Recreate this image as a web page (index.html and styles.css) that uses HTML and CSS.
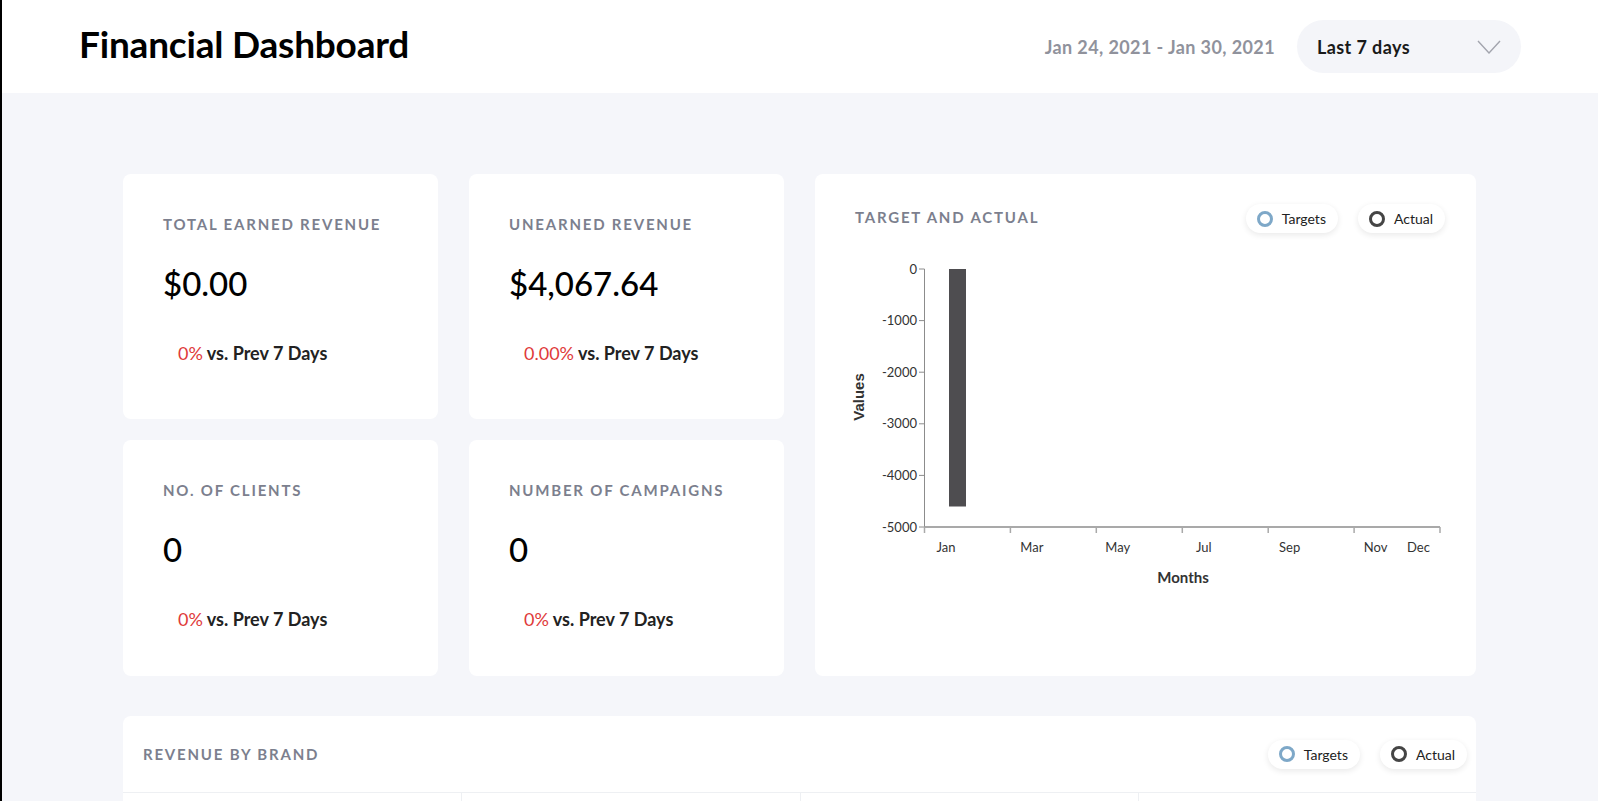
FILE: index.html
```html
<!DOCTYPE html>
<html lang="en">
<head>
<meta charset="utf-8">
<title>Financial Dashboard</title>
<link rel="stylesheet" href="styles.css">
</head>
<body>
<header class="topbar">
  <h1 class="title">Financial Dashboard</h1>
  <div class="range">
    <span class="range-dates">Jan 24, 2021 - Jan 30, 2021</span>
    <div class="select">
      <span>Last 7 days</span>
      <svg class="chev" width="24" height="14" viewBox="0 0 24 14"><path d="M1 1 L12 13 L23 1" fill="none" stroke="#a3a5ae" stroke-width="1.4"/></svg>
    </div>
  </div>
</header>
<main class="content">
  <section class="grid">
    <div class="card stat">
      <div class="label">TOTAL EARNED REVENUE</div>
      <div class="value">$0.00</div>
      <div class="change"><span class="neg">0%</span> vs. Prev 7 Days</div>
    </div>
    <div class="card stat">
      <div class="label">UNEARNED REVENUE</div>
      <div class="value">$4,067.64</div>
      <div class="change"><span class="neg">0.00%</span> vs. Prev 7 Days</div>
    </div>
    <div class="card chart-card">
      <div class="card-head">
        <div class="label">TARGET AND ACTUAL</div>
        <div class="legend">
          <span class="pill"><i class="ring ring-target"></i>Targets</span>
          <span class="pill"><i class="ring ring-actual"></i>Actual</span>
        </div>
      </div>
      <svg class="chart" width="661" height="380" viewBox="0 0 661 380">
        <g class="yaxis" font-size="13" fill="#333" text-anchor="end">
          <line x1="109.5" y1="36" x2="109.5" y2="294" stroke="#8c8c8c" stroke-width="1"/>
          <line x1="104" y1="36" x2="109.5" y2="36" stroke="#8c8c8c"/>
          <line x1="104" y1="87.6" x2="109.5" y2="87.6" stroke="#8c8c8c"/>
          <line x1="104" y1="139.2" x2="109.5" y2="139.2" stroke="#8c8c8c"/>
          <line x1="104" y1="190.8" x2="109.5" y2="190.8" stroke="#8c8c8c"/>
          <line x1="104" y1="242.4" x2="109.5" y2="242.4" stroke="#8c8c8c"/>
          <line x1="104" y1="294" x2="109.5" y2="294" stroke="#8c8c8c"/>
          <text x="102" y="40.5">0</text>
          <text x="102" y="92">-1000</text>
          <text x="102" y="143.7">-2000</text>
          <text x="102" y="195.3">-3000</text>
          <text x="102" y="246.9">-4000</text>
          <text x="102" y="298.5">-5000</text>
        </g>
        <text class="axis-title-y" x="0" y="0" transform="translate(49 164) rotate(-90)" text-anchor="middle">Values</text>
        <rect x="134" y="36" width="17" height="237.5" fill="#4e4d50"/>
        <g class="xaxis" font-size="13" fill="#333" text-anchor="middle">
          <line x1="109.5" y1="294" x2="625" y2="294" stroke="#a9a9a9" stroke-width="2"/>
          <line x1="109.5" y1="294" x2="109.5" y2="300" stroke="#a9a9a9" stroke-width="1.5"/>
          <line x1="195.4" y1="294" x2="195.4" y2="300" stroke="#a9a9a9" stroke-width="1.5"/>
          <line x1="281.3" y1="294" x2="281.3" y2="300" stroke="#a9a9a9" stroke-width="1.5"/>
          <line x1="367.3" y1="294" x2="367.3" y2="300" stroke="#a9a9a9" stroke-width="1.5"/>
          <line x1="453.2" y1="294" x2="453.2" y2="300" stroke="#a9a9a9" stroke-width="1.5"/>
          <line x1="539.1" y1="294" x2="539.1" y2="300" stroke="#a9a9a9" stroke-width="1.5"/>
          <line x1="625" y1="294" x2="625" y2="300" stroke="#a9a9a9" stroke-width="1.5"/>
          <text x="131" y="318.5">Jan</text>
          <text x="216.9" y="318.5">Mar</text>
          <text x="302.8" y="318.5">May</text>
          <text x="388.8" y="318.5">Jul</text>
          <text x="474.7" y="318.5">Sep</text>
          <text x="560.6" y="318.5">Nov</text>
          <text x="603.5" y="318.5">Dec</text>
        </g>
        <text class="axis-title-x" x="368" y="349.5" text-anchor="middle">Months</text>
      </svg>
    </div>
    <div class="card stat stat-low">
      <div class="label">NO. OF CLIENTS</div>
      <div class="value">0</div>
      <div class="change"><span class="neg">0%</span> vs. Prev 7 Days</div>
    </div>
    <div class="card stat stat-low">
      <div class="label">NUMBER OF CAMPAIGNS</div>
      <div class="value">0</div>
      <div class="change"><span class="neg">0%</span> vs. Prev 7 Days</div>
    </div>
  </section>
  <section class="card brand-card">
    <div class="brand-head">
      <div class="label">REVENUE BY BRAND</div>
      <div class="legend">
        <span class="pill"><i class="ring ring-target"></i>Targets</span>
        <span class="pill"><i class="ring ring-actual"></i>Actual</span>
      </div>
    </div>
    <div class="brand-cols">
      <div class="brand-col"></div>
      <div class="brand-col"></div>
      <div class="brand-col"></div>
      <div class="brand-col"></div>
    </div>
  </section>
</main>
</body>
</html>
```
FILE: styles.css
```css
* { box-sizing: border-box; }

html, body { margin: 0; padding: 0; }

body {
  font-family: "Lato", "Noto Sans", sans-serif;
  background: #f5f6fa;
  border-left: 2px solid #000;
  min-height: 100vh;
  color: #111;
}

.topbar {
  height: 93px;
  background: #fff;
  display: flex;
  align-items: center;
  justify-content: space-between;
  padding: 0 77px 0 77px;
}

.title {
  margin: 0;
  font-size: 37px;
  font-weight: 700;
  color: #000;
  letter-spacing: -0.2px;
  position: relative;
  top: -3px;
}

.range {
  display: flex;
  align-items: center;
  gap: 22px;
}

.range-dates {
  font-size: 18px;
  font-weight: 700;
  letter-spacing: 0.4px;
  color: #90929c;
}

.select {
  width: 224px;
  height: 53px;
  border-radius: 27px;
  background: #f4f5f9;
  display: flex;
  align-items: center;
  justify-content: space-between;
  padding: 0 20px 0 20px;
  font-size: 18px;
  font-weight: 700;
  letter-spacing: 0.4px;
  color: #1a1a1a;
}

.chev { display: block; }

.content {
  padding: 81px 122px 0 121px;
}

.grid {
  display: grid;
  grid-template-columns: 315px 315px 1fr;
  grid-template-rows: 245px 236px;
  column-gap: 31px;
  row-gap: 21px;
}

.card {
  background: #fff;
  border-radius: 8px;
}

.stat {
  padding: 41px 40px 0 40px;
}

.label {
  font-size: 15px;
  line-height: 18px;
  font-weight: 700;
  letter-spacing: 1.8px;
  color: #7c7f8e;
}

.value {
  margin-top: 30px;
  font-size: 33px;
  line-height: 40px;
  font-weight: 500;
  color: #000;
}

.change {
  margin-top: 40px;
  padding-left: 15px;
  font-size: 18px;
  line-height: 20px;
  font-weight: 700;
  color: #222;
}

.neg { color: #e03a3a; font-weight: 400; }

.chart-card {
  grid-column: 3;
  grid-row: 1 / span 2;
  display: flex;
  flex-direction: column;
}

.card-head {
  display: flex;
  align-items: center;
  justify-content: space-between;
  padding: 30px 31px 0 40px;
  height: 59px;
}

.card-head .label {
  position: relative;
  top: -2px;
}

.legend {
  display: flex;
  gap: 20px;
}

.pill {
  display: inline-flex;
  align-items: center;
  height: 29px;
  padding: 0 12px 0 11px;
  border-radius: 15px;
  background: #fff;
  box-shadow: 0 2px 6px rgba(0, 0, 0, 0.09);
  font-size: 14px;
  color: #222;
}

.ring {
  display: inline-block;
  width: 16px;
  height: 16px;
  border-radius: 50%;
  border: 3px solid #7ea8c8;
  margin-right: 9px;
}

.ring-actual { border-color: #454545; }

.chart {
  display: block;
  font-family: "Lato", sans-serif;
}

.axis-title-y {
  font-family: "Liberation Sans", Arial, sans-serif;
  font-size: 15px;
  font-weight: 700;
  fill: #333;
}

.axis-title-x {
  font-size: 15px;
  font-weight: 700;
  fill: #333;
}

.brand-card {
  margin-top: 40px;
}

.brand-head {
  height: 77px;
  display: flex;
  align-items: center;
  justify-content: space-between;
  padding: 0 9px 0 20px;
  border-bottom: 1px solid #eef0f3;
}

.brand-cols {
  display: grid;
  grid-template-columns: repeat(4, 1fr);
  height: 200px;
}

.brand-col + .brand-col {
  border-left: 1px solid #eef0f3;
}
```
